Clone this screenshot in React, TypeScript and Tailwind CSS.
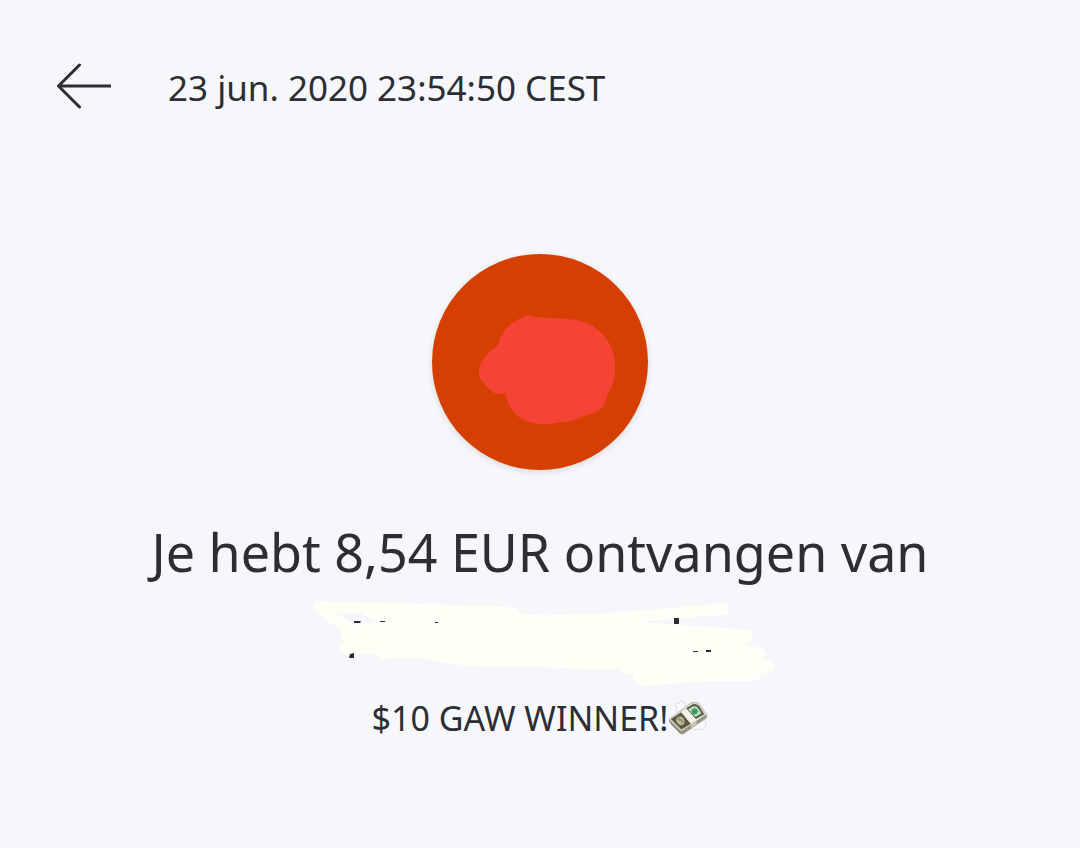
function BackArrow() {
  return (
    <svg
      viewBox="0 0 56 48"
      className="h-12 w-14"
      fill="none"
      stroke="currentColor"
      strokeWidth="3"
      strokeLinecap="round"
      strokeLinejoin="round"
      aria-hidden="true"
    >
      <path d="M23.5 2 2.5 23 23.5 44" />
      <path d="M3 23H55" strokeLinecap="butt" />
    </svg>
  );
}

function Avatar() {
  return (
    <div className="h-54 w-54 overflow-hidden rounded-full bg-[#d54002] shadow-[0_2px_6px_rgba(60,40,30,0.14)]">
      <svg viewBox="0 0 216 216" className="h-full w-full" aria-hidden="true">
        <path
          d="M90 64C93 60 99 61 103 63L134 65C158 65 175 79 181 98C184 109 184 122 180 132C176 141 174 143 173 149C171 156 161 159 152 162C146 166 137 167 125 169C109 172 96 169 87 163C78 156 76 149 73 139C66 142 61 139 56 134C50 128 46 123 47 116C48 106 58 97 66 91C69 78 78 68 90 64Z"
          fill="#f54336"
        />
      </svg>
    </div>
  );
}

// Name line, covered by marker strokes
function HiddenName() {
  return (
    <svg viewBox="0 0 480 96" className="h-24 w-120 max-w-full" aria-hidden="true">
      <g fill="none" stroke="#fffff7" strokeLinecap="round" strokeLinejoin="round">
        <path d="M19 9L60 10L140 12L214 15" strokeWidth="11" />
        <path d="M19 9L31 19L50 30" strokeWidth="11" />
        <path d="M68 12L98 27" strokeWidth="12" />
        <path d="M212 22C280 25 340 18 424 11" strokeWidth="11" />
      </g>
      <path
        d="M42 28L82 24L72 8L212 10Q219 12 221 17L320 20L352 25L450 32Q456 36 451 42L447 47Q450 49 457 49Q465 51 465 57L464 62Q476 63 475 69Q473 76 462 75Q460 84 449 83L408 83L366 86L342 88Q332 86 334 77Q321 76 321 71L285 71L240 69L190 69Q150 68 120 59L82 61L75 56L47 56Q38 55 40 47L45 44Q38 37 42 28Z"
        fill="#fffff7"
      />
      <g fill="#2c2e33">
        <path d="M54 23h7l-1 2h-6zM80 23h5v1h-5zM135 24h3v1h-3z" />
        <path d="M50 56l4-1v5h-5zM374 20h5v6h-5z" />
        <path d="M393 53h5v1h-5zM406 52h5v2h-5z" />
      </g>
    </svg>
  );
}

function MoneyWings() {
  return (
    <svg viewBox="0 0 42 40" className="h-10 w-10" role="img" aria-label="money with wings">
      <g fill="#f7f9fa" stroke="#d4d8da" strokeWidth="1" strokeLinejoin="round">
        <path d="M17 15C10 16 7 12 10 9C6 6 9 3 12 5C12 1 17 2 18 6L22 11Z" />
        <path d="M29 24C34 22 40 22 40 27C39 33 34 33 31 31C27 34 23 31 25 27Z" />
      </g>
      <path d="M1 21L25 3L32 4L41 16V20L16 37L12 36L1 24Z" fill="#aaa798" />
      <path d="M1 21L24 4Q30 2 34 7L41 16L14 34Z" fill="#d5d5c5" />
      <path d="M3 21L14 14L24 26L14 32Z" fill="#5d5842" />
      <path d="M19 10L25 6Q30 4 33 8L38 16L29 21Z" fill="#545d47" />
      <path d="M21 11L26 8Q30 7 32 10L35 15L29 19Z" fill="#c4e0c9" />
      <circle cx="28" cy="13" r="3" fill="#3a9d5f" />
      <path d="M28 9v8M24 13h8M25 10l6 6M31 10l-6 6" stroke="#3a9d5f" strokeWidth="0.8" />
      <ellipse cx="13" cy="23" rx="4" ry="5" transform="rotate(-36 13 23)" fill="#bdb899" />
      <path d="M12 19c-3 1-1 4 1 3s4 2 1 4M11 20l5 5" fill="none" stroke="#827b5e" />
      <path d="M14 14L19 10L30 22L24 26Z" fill="#f4f3e9" />
      <path d="M24 26L30 22V27L25 31Z" fill="#cac8bc" />
      <path d="M2 24L14 35L24 28M30 24L40 17M3 26L14 37L24 30M30 26L39 19" fill="none" stroke="#777466" strokeWidth="0.7" />
    </svg>
  );
}

export default function App() {
  return (
    <div className="min-h-screen bg-[#f6f7fb] pb-24 font-['Noto_Sans',sans-serif] text-[#2c2e33]">
      <header className="flex items-center gap-14 px-14 pt-15">
        <button type="button" aria-label="Terug" className="shrink-0 cursor-pointer">
          <BackArrow />
        </button>
        <p className="pt-0.5 text-[35px] leading-13">23 jun. 2020 23:54:50 CEST</p>
      </header>

      <main className="flex flex-col items-center px-6 pt-35 text-center">
        <Avatar />
        <h1 className="mt-[46px] text-[52px] leading-18">Je hebt 8,54 EUR ontvangen van</h1>
        <div className="mt-2.5">
          <HiddenName />
        </div>
        <p className="flex items-center text-[34px] leading-12">
          $10 GAW WINNER!
          <MoneyWings />
        </p>
      </main>
    </div>
  );
}
